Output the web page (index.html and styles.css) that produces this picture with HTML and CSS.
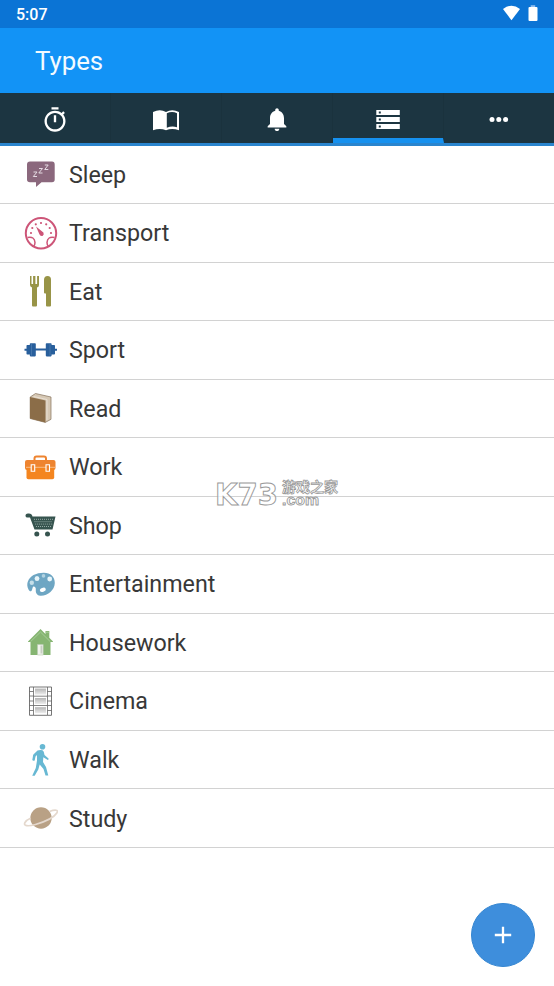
FILE: index.html
```html
<!DOCTYPE html>
<html lang="en">
<head>
<meta charset="utf-8">
<title>Types</title>
<link rel="stylesheet" href="styles.css">
</head>
<body>
<div class="status"><span class="time">5:07</span>
<svg class="status-icons" width="40" height="28" viewBox="0 0 40 28"><path fill="#fff" d="M2 9Q10.500 2.500 19 9L10.500 20.300Z"/><path fill="#8dbdf0" d="M29.700 5.200h4.500v2h-4.500z"/><path fill="#fff" d="M27.500 8q0-1 1-1h7q1 0 1 1v12q0 1-1 1h-7q-1 0-1-1z"/></svg></div>
<header class="appbar"><h1>Types</h1></header>
<nav class="tabs">
<div class="tab"><svg viewBox="0 0 24 24"><path d="M15 1H9v2h6V1zm-4 13h2V8h-2v6zm8.030-6.610l1.420-1.420c-.43-.51-.9-.99-1.410-1.410l-1.420 1.420C16.070 4.740 14.120 4 12 4c-4.970 0-9 4.030-9 9s4.020 9 9 9 9-4.030 9-9c0-2.120-.74-4.070-1.970-5.610zM12 20c-3.870 0-7-3.130-7-7s3.130-7 7-7 7 3.130 7 7-3.130 7-7 7z"/></svg></div>
<div class="tab"><svg viewBox="0 0 28 28"><path d="M1 6Q8 2.500 14 6Q20 2.500 27 6V24.300Q20 21.500 14 24.300Q8 21.500 1 24.300ZM14.800 7.300V21.800Q20 19.700 25 21.300V7.200Q20 4.700 14.800 7.300Z" fill-rule="evenodd"/></svg></div>
<div class="tab"><svg viewBox="0 0 24 24"><path d="M12 22c1.100 0 2-.9 2-2h-4c0 1.100.9 2 2 2zm6-6v-5c0-3.070-1.640-5.640-4.500-6.320V4c0-.83-.67-1.500-1.500-1.500s-1.500.67-1.500 1.500v.68C7.630 5.360 6 7.920 6 11v5l-2 2v1h16v-1z" transform="translate(0 -.6)"/></svg></div>
<div class="tab active"><svg viewBox="0 0 28 28"><path fill-rule="evenodd" d="M2.300 4h23.500v5H2.300zM2.300 11h23.500v5H2.300zM2.300 18h23.500v5H2.300zM4.800 5.500v2h2v-2zM4.800 12.500v2h2v-2zM4.800 19.500v2h2v-2z"/></svg></div>
<div class="tab"><svg viewBox="0 0 28 28"><circle cx="7" cy="13.500" r="2.500"/><circle cx="13.800" cy="13.500" r="2.500"/><circle cx="20.600" cy="13.500" r="2.500"/></svg></div>
</nav>
<main class="list">
<div class="row"><svg viewBox="0 0 36 36"><path fill="#8b687d" d="M8 5.500h22q2.700 0 2.700 3v15q0 2.800-2.700 2.800H19.500L14 31v-4.700H8q-3 0-3-2.800v-15q0-3 3-3z"/><path fill="none" stroke="#e5dbe3" stroke-width="1" d="M11.500 16h3.500l-3.700 4.500h3.700M17 12.500h3.500l-3.700 4.500h3.700M22.800 9h3.400l-3.500 4.500h3.600"/></svg><span>Sleep</span></div>
<div class="row"><svg viewBox="0 0 36 36"><g fill="none" stroke="#cd5578"><circle cx="19" cy="18.300" r="15.200" stroke-width="2"/><path stroke-width="1.500" d="M5.500 22.500Q12.500 21 13 27.500Q13 30 11.500 31.500M32.500 22.500Q25.500 21 25 27.500Q25 30 26.500 31.500"/><path stroke-width="2.200" stroke-linecap="round" d="M9 18h0M10.300 13h0M13.800 9.300h0M19 8h0M24.200 9.300h0M27.700 13h0M29 18h0"/></g><path fill="#cd5578" d="M14 11.500L21.400 17.500Q22.500 19.500 20.500 21Q18 21.500 17.300 19Z"/></svg><span>Transport</span></div>
<div class="row"><svg viewBox="0 0 36 36"><path fill="#989447" d="M8 3h1.500v8h1.600V3h2.300v8h1.700V3H17v9q0 2.200-2 2.500v18q0 1-1 1h-3q-1 0-1-1v-18q-2-.6-2-2.500zM22 19.500V7q0-4 3.600-4Q29 3 29 6.500v26q0 1-1 1h-3q-1 0-1-1V20.500h-1q-1 0-1-1z"/></svg><span>Eat</span></div>
<div class="row"><svg viewBox="0 0 36 36"><path fill="#285f9c" d="M2.500 16.800h2v-3q0-.8.800-.8h2.500v-1q0-.8.800-.8H13q.8 0 .8.800v4.500h10V12q0-.8.800-.8h4.200q.8 0 .8.800v1h2.600q.8 0 .8.800v3h2v2h-2v3q0 .8-.8.800h-2.600v1q0 .8-.8.800h-4.200q-.8 0-.8-.8v-5h-10v5q0 .8-.8.800H8.600q-.8 0-.8-.8v-1H5.300q-.8 0-.8-.8v-3h-2z"/><path stroke="#7099c2" stroke-width=".4" d="M9.500 12v11.500M28 12v11.500"/></svg><span>Sport</span></div>
<div class="row"><svg viewBox="0 0 36 36"><path fill="#d6c8b4" stroke="#84705a" stroke-width=".7" d="M8.200 7L13.500 3.500L29 7V29.300L23.300 32.400L8.200 28.500Z"/><path fill="#8b6d48" d="M8 7L23.500 10.500V32.600L8 28.600Z"/><path fill="none" stroke="#eee5da" stroke-width=".8" d="M11.500 6.500L25 9.500V30"/></svg><span>Read</span></div>
<div class="row"><svg viewBox="0 0 36 36"><path fill="none" stroke="#ee8430" stroke-width="2" d="M12.500 12V9.500q0-2 2-2h7.500q2 0 2 2V12"/><rect x="3" y="11" width="30.500" height="10" rx="2" fill="#ee8430"/><path fill="#f4851f" d="M4.500 17.500h27.700v11q0 1.800-1.800 1.800H6.300q-1.800 0-1.800-1.800z"/><path stroke="#f8c499" stroke-width=".9" d="M4 18.300h29"/><path fill="#ee8430" stroke="#fff" stroke-width="1.100" d="M9.200 15.700h3.500v6.500H9.200zM24 15.700h3.500v6.500H24z"/></svg><span>Work</span></div>
<div class="row"><svg viewBox="0 0 36 36"><path fill="#36544f" d="M3.500 9Q3.300 6.500 6 6.500Q9.800 6 10.500 9.500H33.500L30.500 22.500H12.500L8 10.500H6.300Q3.800 11 3.500 9Z"/><path fill="none" stroke="#a2b5b0" stroke-width=".9" stroke-dasharray="1 1" d="M12 12.300h19M12.500 14.700h18M13.200 17.100h17M14 19.500h15.500"/><circle cx="14.800" cy="27" r="2.500" fill="#36544f"/><circle cx="25.500" cy="27" r="2.500" fill="#36544f"/></svg><span>Shop</span></div>
<div class="row"><svg viewBox="0 0 36 36"><path fill="#6ea6c3" d="M21.500 6.700C28 6.500 33 10.500 32.800 17C32.700 24 26 29.500 19 29.800C16 30 14.800 28.500 14 26.500C13.500 23.500 14.500 22 12.500 20.700C10.500 19.700 10.700 22 10 24C9.200 26 7.500 25.500 6.500 23.500C3.500 17.500 6.500 12 11.500 9Q16 6.800 21.500 6.700Z"/><g fill="#e7f5fa"><ellipse cx="15" cy="12.500" rx="2.400" ry="2.500"/><circle cx="27.700" cy="13" r="2.400"/><ellipse cx="20.800" cy="23.800" rx="3" ry="2" transform="rotate(-20 20.800 23.800)" fill="#fff"/></g><circle cx="9.800" cy="16.800" r="2.200" fill="#c5dfe9"/><circle cx="21.500" cy="9.900" r="1.800" fill="#b2d3e2"/></svg><span>Entertainment</span></div>
<div class="row"><svg viewBox="0 0 36 36"><path fill="#86b572" d="M6 17.500L18.500 5L23.500 10V7H27.300V13.800L31 17.500V18H28.500V31H8.500V18H6Z"/><path fill="none" stroke="#b5d5a9" stroke-width=".7" d="M8.500 17.700L18.500 8L28.300 17.700M23.300 8.300h4"/><path fill="#f1f3ed" stroke="#b9cab1" stroke-width=".6" d="M15.500 20.500h5.700V31h-5.700z"/><path fill="#c8cec3" d="M18.500 21.500h1.800v8h-1.800z"/></svg><span>Housework</span></div>
<div class="row"><svg viewBox="0 0 36 36"><path fill="#fff" stroke="#666" stroke-width=".9" d="M7.500 4h22v28.300h-22z"/><path fill="none" stroke="#666" stroke-width=".8" d="M11.500 4v28M25.500 4v28M11.500 13.200h14M11.500 22.500h14M7.500 8.500h4M7.500 13h4M7.500 18h4M7.500 22.500h4M7.500 27.500h4M25.500 8.500h4M25.500 13h4M25.500 18h4M25.500 22.500h4M25.500 27.500h4"/><linearGradient id="film" x1="0" y1="0" x2="0" y2="1"><stop stop-color="#b5b5b5"/><stop offset="1" stop-color="#eee"/></linearGradient><path fill="url(#film)" d="M13 5.600h11v6H13z"/><path fill="url(#film)" d="M13 15h11v6H13z"/><path fill="url(#film)" d="M13 24.200h11v6H13z"/></svg><span>Cinema</span></div>
<div class="row"><svg viewBox="0 0 36 36"><circle cx="20.500" cy="4.800" r="2.800" fill="#67b8d3"/><path fill="#67b8d3" d="M15.500 8.500Q18 7.500 20.500 8.200Q22 9 22.500 13L26.500 16.500Q27 17.500 25.800 18L21.300 15.300L21 20L24 25L26.300 33.500H23.500L21.500 27L17.700 22.500L16.300 27.500L12.700 33.700H10.200L13.800 26L15 18.500V13L13.500 14.500L12.700 18.500Q11 19.300 10.300 18L11.200 12.700Z"/></svg><span>Walk</span></div>
<div class="row"><svg viewBox="0 0 36 36"><circle cx="19" cy="18" r="10.700" fill="#b9a185"/><path fill="none" stroke="#e4d8cd" stroke-width="1.700" d="M27.500 11.500C33 9.500 37 9.700 34.800 13C32 17.500 22 22 13.500 24.500C6 26.600 1 26.200 3 22.500Q4.500 20 8.500 18.300"/></svg><span>Study</span></div>
</main>
<svg class="watermark" viewBox="0 0 132 48">
<g fill="#fff" fill-opacity=".7" stroke="#999"><text class="wm-logo" x="1" y="32.500" textLength="63" lengthAdjust="spacingAndGlyphs" stroke-width="1">K73</text><text class="wm-cn" x="68" y="20" textLength="56" stroke-width=".8">游戏之家</text><text class="wm-com" x="68" y="33" textLength="37" lengthAdjust="spacingAndGlyphs" stroke-width=".8">.com</text></g></svg>
<button class="fab" aria-label="Add"><svg width="18" height="18" viewBox="0 0 18 18"><path stroke="#fff" stroke-width="2.300" d="M9 .8v16.400M.8 9h16.400"/></svg></button>
</body>
</html>
```
FILE: styles.css
```css
* { box-sizing: border-box; }
body {
  margin: 0;
  width: 554px;
  height: 986px;
  overflow: hidden;
  position: relative;
  background: #fff;
  font-family: Roboto, sans-serif;
}
.status {
  height: 28px;
  padding: 0 13px 0 16px;
  display: flex;
  justify-content: space-between;
  align-items: center;
  background: #0b74d5;
  color: #fff;
}
.time { font-size: 16px; font-weight: 500; line-height: 28px; padding-top: 1px; }
.appbar {
  height: 64.600px;
  padding: 2px 35px 0;
  display: flex;
  align-items: center;
  background: #1293f6;
}
h1 { margin: 0; font-size: 25.800px; font-weight: 400; line-height: 32px; color: #f2faff; }
.tabs {
  height: 53px;
  display: flex;
  background: #1c3541;
  border-bottom: 3px solid #2a85ce;
}
.tab {
  flex: 1;
  display: flex;
  justify-content: center;
  padding-top: 13px;
  border-right: 1px solid #1a323d;
}
.tab:last-child { border-right: 0; }
.tab svg { width: 28px; height: 28px; fill: #fff; }
.active { border-bottom: 5px solid #1691ef; margin-left: -.5px; }
.row {
  height: 58.530px;
  padding-left: 22px;
  display: flex;
  align-items: center;
  gap: 11px;
  border-bottom: 1px solid #d2d2d2;
  color: #383838;
  font-size: 23.250px;
}
.row svg { width: 36px; height: 36px; flex: none; }
.row span { padding-top: 1px; }
.watermark { position: absolute; left: 214px; top: 472px; width: 132px; height: 48px; }
.wm-logo { font: 700 31px "DejaVu Sans", sans-serif; }
.wm-cn { font: 700 14px "Noto Sans CJK SC", sans-serif; }
.wm-com { font: 700 14px "Liberation Sans", sans-serif; }
.fab {
  position: absolute;
  left: 471px;
  top: 903px;
  width: 64px;
  height: 64px;
  padding: 0;
  border: 1px solid #3586d1;
  border-radius: 50%;
  background: #3e8edc;
  display: flex;
  align-items: center;
  justify-content: center;
}
```
